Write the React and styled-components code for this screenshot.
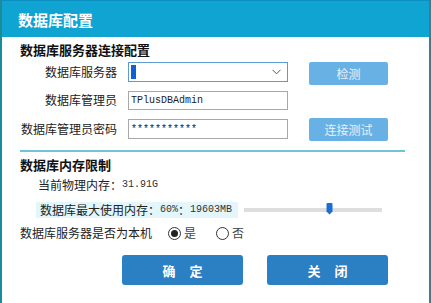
import React from "react";
import styled, { createGlobalStyle } from "styled-components";

const Global = createGlobalStyle`
  html, body { margin: 0; padding: 0; background: #ffffff; }
  body { font-family: "Noto Sans CJK SC", "Noto Sans", sans-serif; }
  * { box-sizing: border-box; }
`;

const Window = styled.div`
  width: 431px;
  height: 303px;
  background: #ffffff;
  border-left: 2px solid #1c8b98;
  border-right: 2px solid #1c8b98;
  display: flex;
  flex-direction: column;
  color: #1a1a1a;
  font-size: 12px;
  overflow: hidden;
`;

const TitleBar = styled.div`
  height: 37px;
  flex: none;
  background: #10a4d3;
  border-top: 1px solid #0c90bf;
  display: flex;
  align-items: center;
  padding-left: 16px;
  color: #ffffff;
  font-size: 15px;
  font-weight: 700;
`;

const SectionTitle = styled.div`
  margin-top: ${(p) => p.$top}px;
  padding-left: 18px;
  height: 16px;
  line-height: 16px;
  font-size: 13px;
  font-weight: 700;
  color: #111;
`;

const Form = styled.div`
  margin-top: 4px;
  padding-left: 16px;
  display: grid;
  grid-template-columns: 99px 160px 89px;
  grid-auto-rows: 23px;
  column-gap: 11px;
  row-gap: 5px;
`;

const Label = styled.div`
  text-align: right;
  line-height: ${(p) => (p.$lh ? p.$lh : 20)}px;
  height: 20px;
  white-space: nowrap;
  font-size: 12px;
  color: #222;
`;

const Field = styled.div`
  height: ${(p) => (p.$h ? p.$h : 20)}px;
  margin-top: ${(p) => (p.$mt ? p.$mt : 0)}px;
  border: 1px solid ${(p) => (p.$focus ? "#5b9bd5" : "#a8a8a8")};
  background: #fff;
  display: flex;
  align-items: center;
  padding-left: 2px;
  position: relative;
  font-family: "Liberation Mono", "DejaVu Sans Mono", monospace;
  font-size: 10px;
  color: #222;
`;

const Caret = styled.span`
  display: inline-block;
  width: 5px;
  height: 14px;
  background: #1060d8;
`;

const Chevron = styled.svg`
  position: absolute;
  right: 6px;
  top: 6px;
`;

const SmallButton = styled.div`
  margin-left: 10px;
  width: 79px;
  height: 23px;
  border-radius: 2px;
  background: #68b1e5;
  color: #e4f1fb;
  font-size: 12px;
  display: flex;
  align-items: center;
  justify-content: center;
`;

const Separator = styled.div`
  margin-top: 9px;
  margin-left: 18px;
  width: 385px;
  height: 2px;
  background: #6fc4d6;
  flex: none;
`;

const InfoLine = styled.div`
  margin-top: ${(p) => p.$top}px;
  padding-left: ${(p) => p.$left}px;
  height: 16px;
  line-height: 16px;
  display: flex;
  align-items: center;
  white-space: nowrap;
  font-size: 12px;
  color: #222;
`;

const Mono = styled.span`
  font-family: "Liberation Mono", "DejaVu Sans Mono", monospace;
  font-size: 10px;
  color: #333;
`;

const Highlight = styled.div`
  background: #e2f6fb;
  padding: 0 6px 0 4px;
  height: 16px;
  line-height: 16px;
  display: flex;
  align-items: center;
`;

const SliderTrack = styled.div`
  margin-left: 6px;
  width: 138px;
  height: 4px;
  background: #dedede;
  position: relative;
`;

const Thumb = styled.svg`
  position: absolute;
  left: ${(p) => p.$pos}px;
  top: -5px;
`;

const RadioGroup = styled.label`
  display: flex;
  align-items: center;
  margin-left: ${(p) => p.$ml}px;
  color: #444;
  font-size: 12px;
`;

const RadioCircle = styled.span`
  width: 13px;
  height: 13px;
  border-radius: 50%;
  border: 1px solid #333;
  margin-right: 3px;
  display: flex;
  align-items: center;
  justify-content: center;
  &::after {
    content: "";
    width: 7px;
    height: 7px;
    border-radius: 50%;
    background: ${(p) => (p.$checked ? "#222" : "transparent")};
  }
`;

const ButtonRow = styled.div`
  margin-top: 14px;
  padding-left: 120px;
  display: flex;
  gap: 24px;
`;

const BigButton = styled.div`
  width: 121px;
  height: 30px;
  border-radius: 3px;
  background: #2b7fc3;
  color: #ffffff;
  font-size: 13px;
  font-weight: 700;
  letter-spacing: 14px;
  padding-left: 14px;
  display: flex;
  align-items: center;
  justify-content: center;
`;

export default function App() {
  return (
    <>
      <Global />
      <Window>
        <TitleBar>数据库配置</TitleBar>
        <SectionTitle $top={5}>数据库服务器连接配置</SectionTitle>
        <Form>
          <Label>数据库服务器</Label>
          <Field $focus>
            <Caret />
            <Chevron width="9" height="6" viewBox="0 0 9 6">
              <path d="M0.5 0.8 L4.5 4.8 L8.5 0.8" fill="none" stroke="#555" strokeWidth="1" />
            </Chevron>
          </Field>
          <SmallButton>检测</SmallButton>

          <Label>数据库管理员</Label>
          <Field $h={19} $mt={1}>TPlusDBAdmin</Field>
          <div />

          <Label $lh={22}>数据库管理员密码</Label>
          <Field $mt={1}>***********</Field>
          <SmallButton>连接测试</SmallButton>
        </Form>
        <Separator />
        <SectionTitle $top={5}>数据库内存限制</SectionTitle>
        <InfoLine $top={4} $left={36}>
          当前物理内存：<Mono>31.91G</Mono>
        </InfoLine>
        <InfoLine $top={9} $left={34}>
          <Highlight>
            数据库最大使用内存：<Mono>60%</Mono>：<Mono>19603MB</Mono>
          </Highlight>
          <SliderTrack>
            <Thumb $pos={82} width="7" height="12" viewBox="0 0 7 12">
              <path d="M0.5 1 Q0.5 0 1.5 0 L5.5 0 Q6.5 0 6.5 1 L6.5 8.5 L3.5 11.5 L0.5 8.5 Z" fill="#1b6fd3" />
            </Thumb>
          </SliderTrack>
        </InfoLine>
        <InfoLine $top={7} $left={18}>
          数据库服务器是否为本机
          <RadioGroup $ml={16}>
            <RadioCircle $checked />是
          </RadioGroup>
          <RadioGroup $ml={20}>
            <RadioCircle />否
          </RadioGroup>
        </InfoLine>
        <ButtonRow>
          <BigButton>确定</BigButton>
          <BigButton>关闭</BigButton>
        </ButtonRow>
      </Window>
    </>
  );
}
